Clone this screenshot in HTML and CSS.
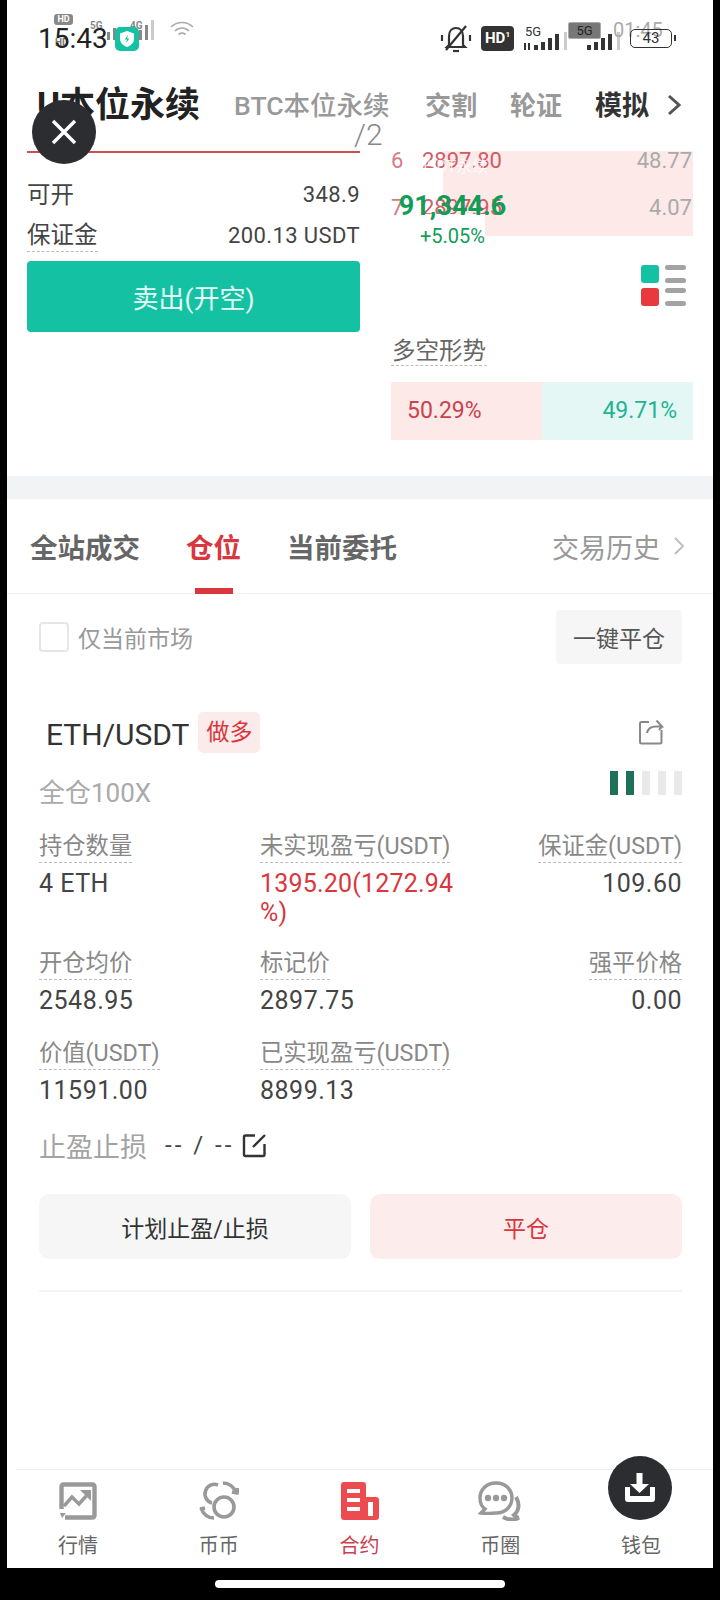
FILE: index.html
```html
<!DOCTYPE html>
<html lang="zh-CN">

<head>
    <meta charset="UTF-8">
    <meta name="viewport" content="width=device-width, initial-scale=1.0">
    <title>合约</title>
    <link rel="stylesheet" href="styles.css">
</head>

<body>
    <div class="screen">
        <!-- status bars, two of them drawn over each other -->
        <div class="status">
            <span class="st-hd">HD</span>
            <span class="st-ghost">HD</span>
            <span class="st-small st-5g">5G</span>
            <span class="st-small st-4g">4G</span>
            <svg class="st-sig1" width="60" height="24" viewBox="0 0 60 24" fill="#888">
                <rect x="0" y="14" width="3" height="8" /><rect x="6" y="10" width="3" height="12" />
                <rect x="26" y="17" width="3" height="5" /><rect x="32" y="12" width="3" height="10" />
                <rect x="38" y="7" width="3" height="15" /><rect x="44" y="2" width="3" height="20" fill="#ccc" />
            </svg>
            <svg class="st-wifi" width="24" height="20" viewBox="0 0 24 20" fill="none" stroke="#aaa" stroke-width="1.6">
                <path d="M1 7C7 1 17 1 23 7" /><path d="M5 11C9 7 15 7 19 11" /><path d="M8.500 14.500C10.500 13 13.500 13 15.500 14.500" />
            </svg>
            <span class="st-time">15:43</span>
            <span class="st-shield">
                <svg width="14" height="16" viewBox="0 0 14 16"><path d="M7 0L14 2.500V8C14 12 10.500 14.800 7 16C3.500 14.800 0 12 0 8V2.500Z" fill="#fff" /><path d="M7.800 4L4.800 8.600H6.800L6.200 12L9.200 7.400H7.200Z" fill="#14c2a3" /></svg>
            </span>

            <svg class="st-bell" width="32" height="30" viewBox="0 0 32 30" fill="none" stroke="#333" stroke-width="2.200">
                <path d="M9 21V12C9 7 12 4 16 4C20 4 23 7 23 12V21L25 23H7Z" />
                <path d="M13 27H19" />
                <path d="M26 2L6 26" />
                <path d="M2 11V17M30 11V17" />
            </svg>
            <span class="st-hd2">HD<sup>1</sup></span>
            <span class="st-mid st-5g2">5G</span>
            <svg class="st-sig2" width="46" height="22" viewBox="0 0 46 22" fill="#333">
                <rect x="1" y="13" width="2" height="7" /><rect x="5" y="13" width="2" height="7" />
                <rect x="11" y="15" width="4" height="5" /><rect x="18" y="12" width="4" height="8" />
                <rect x="25" y="8" width="4" height="12" /><rect x="32" y="4" width="4" height="16" />
                <rect x="41" y="2" width="3" height="18" fill="#ccc" />
            </svg>
            <span class="st-5gbox">5G</span>
            <svg class="st-sig3" width="46" height="22" viewBox="0 0 46 22" fill="#333">
                <rect x="2" y="15" width="4" height="5" /><rect x="9" y="12" width="4" height="8" />
                <rect x="16" y="8" width="4" height="12" /><rect x="23" y="4" width="4" height="16" />
                <rect x="32" y="2" width="3" height="18" fill="#ccc" />
            </svg>
            <span class="st-time2">01:45</span>
            <span class="st-batt">43</span>
        </div>

        <nav class="top-nav">
            <span class="nav-main">U本位永续</span>
            <span class="nav-item nav-btc">BTC本位永续<span class="nav-sub">/2</span></span>
            <span class="nav-item">交割</span>
            <span class="nav-item">轮证</span>
            <span class="nav-item nav-dark">模拟</span>
            <svg class="nav-arrow" width="14" height="22" viewBox="0 0 14 22" fill="none" stroke="#555" stroke-width="3">
                <path d="M2 2L12 11L2 20" />
            </svg>
        </nav>

        <section class="trade">
            <div class="order">
                <div class="order-row">
                    <span class="order-label">可开</span>
                    <span class="num">348.9</span>
                </div>
                <div class="order-row">
                    <span class="order-label dashed">保证金</span>
                    <span class="num">200.13 USDT</span>
                </div>
                <button class="sell-btn">卖出(开空)</button>
            </div>
            <div class="book">
                <div class="book-row row-a">
                    <span class="book-no">6</span>
                    <span class="book-price">2897.80</span>
                    <span class="book-qty">48.77</span>
                </div>
                <div class="book-row row-b">
                    <span class="book-no">7</span>
                    <span class="book-price">2897.95</span>
                    <span class="book-qty">4.07</span>
                </div>
                <div class="book-mode">
                    <div class="mode-icon">
                        <i class="mode-sq green"></i>
                        <div class="mode-lines"><i></i><i></i></div>
                        <i class="mode-sq red"></i>
                        <div class="mode-lines"><i></i><i></i></div>
                    </div>
                </div>
                <div class="trend-title"><span class="dashed">多空形势</span></div>
                <div class="trend-bar">
                    <span class="trend-long">50.29%</span>
                    <span class="trend-short">49.71%</span>
                </div>
            </div>
        </section>

        <div class="gap-band"></div>

        <div class="tabs">
            <span class="tab">全站成交</span>
            <span class="tab tab-on">仓位</span>
            <span class="tab">当前委托</span>
            <span class="tab-history">交易历史
                <svg width="12" height="20" viewBox="0 0 12 20" fill="none" stroke="#bbb" stroke-width="1.800"><path d="M2 2L10 10L2 18" /></svg>
            </span>
        </div>

        <div class="filter">
            <label class="filter-check"><i class="checkbox"></i>仅当前市场</label>
            <button class="close-all">一键平仓</button>
        </div>

        <div class="position">
            <div class="pos-head">
                <span class="pos-name">ETH/USDT</span>
                <span class="pos-tag">做多</span>
                <svg class="pos-share" width="26" height="26" viewBox="0 0 26 26" fill="none" stroke="#888" stroke-width="2">
                    <path d="M11 3H3.500A1.500 1.500 0 0 0 2 4.500V23A1.500 1.500 0 0 0 3.500 24.500H22A1.500 1.500 0 0 0 23.500 23V11" />
                    <path d="M9 14C10 9 14 7.500 18 7.500H24L18.500 1.500M24 7.500L21 11" />
                </svg>
            </div>
            <div class="pos-sub">
                <span>全仓100X</span>
                <div class="risk"><i class="on"></i><i class="on"></i><i></i><i></i><i></i></div>
            </div>

            <div class="pos-grid">
                <div class="cell">
                    <span class="cell-label dashed">持仓数量</span>
                    <span class="cell-val">4 ETH</span>
                </div>
                <div class="cell">
                    <span class="cell-label dashed">未实现盈亏(USDT)</span>
                    <span class="cell-val cell-red">1395.20(1272.94<br>%)</span>
                </div>
                <div class="cell cell-right">
                    <span class="cell-label dashed">保证金(USDT)</span>
                    <span class="cell-val">109.60</span>
                </div>
                <div class="cell">
                    <span class="cell-label dashed">开仓均价</span>
                    <span class="cell-val">2548.95</span>
                </div>
                <div class="cell">
                    <span class="cell-label dashed">标记价</span>
                    <span class="cell-val">2897.75</span>
                </div>
                <div class="cell cell-right">
                    <span class="cell-label dashed">强平价格</span>
                    <span class="cell-val">0.00</span>
                </div>
                <div class="cell">
                    <span class="cell-label dashed">价值(USDT)</span>
                    <span class="cell-val">11591.00</span>
                </div>
                <div class="cell">
                    <span class="cell-label dashed">已实现盈亏(USDT)</span>
                    <span class="cell-val">8899.13</span>
                </div>
            </div>

            <div class="stop-row">
                <span class="stop-label">止盈止损</span>
                <span class="stop-val">-- / --</span>
                <svg width="25" height="25" viewBox="0 0 25 25" fill="none" stroke="#333" stroke-width="2.400">
                    <path d="M13 2.500H3.500A1.500 1.500 0 0 0 2 4V21.500A1.500 1.500 0 0 0 3.500 23H21A1.500 1.500 0 0 0 22.500 21.500V11" />
                    <path d="M11 14L23 2" />
                </svg>
            </div>

            <div class="pos-actions">
                <button class="act-btn">计划止盈/止损</button>
                <button class="act-btn act-red">平仓</button>
            </div>
        </div>

        <div class="spacer"></div>

        <footer class="tabbar">
            <div class="bar-item">
                <svg width="38" height="38" viewBox="0 0 38 38" fill="none" stroke="#999" stroke-width="4.400">
                    <path d="M2.500 27V4.500A2 2 0 0 1 4.500 2.500H33.500A2 2 0 0 1 35.500 4.500V33.500A2 2 0 0 1 33.500 35.500H6" />
                    <path d="M5 24L13 15L20 22L29 12" stroke-width="3.400" />
                    <path d="M21 8H32V19Z" fill="#999" stroke="none" />
                    <path d="M1 31H7L3 36Z" fill="#999" stroke="none" />
                </svg>
                <span>行情</span>
            </div>
            <div class="bar-item">
                <svg width="40" height="40" viewBox="0 0 40 40" fill="none" stroke="#999" stroke-width="3.600">
                    <path d="M13 22A9.500 9.500 0 1 1 19 4" />
                    <circle cx="25" cy="26" r="10" />
                    <path d="M24 2C30 2 35 6 37 12M33 11L38 12L39 7" />
                    <path d="M15 37C9 37 4 33 2 27M6 27L1 28" />
                </svg>
                <span>币币</span>
            </div>
            <div class="bar-item bar-on">
                <svg width="38" height="38" viewBox="0 0 38 38">
                    <path d="M3 0H22A3 3 0 0 1 25 3V15H35A3 3 0 0 1 38 18V35A3 3 0 0 1 35 38H3A3 3 0 0 1 0 35V3A3 3 0 0 1 3 0Z" fill="#ec4c50" />
                    <path d="M6 9H19M6 18H19M6 27H19" stroke="#fff" stroke-width="4" />
                    <rect x="27" y="20" width="5" height="14" fill="#fff" />
                </svg>
                <span>合约</span>
            </div>
            <div class="bar-item">
                <svg width="44" height="40" viewBox="0 0 44 40" fill="none" stroke="#999" stroke-width="3.400">
                    <path d="M18 2C8 2 2 9 2 17C2 22 4 26 7 28L3 32C10 33 14 32 18 32C28 32 34 25 34 17C34 9 28 2 18 2Z" />
                    <circle cx="10" cy="17" r="1.500" fill="#999" /><circle cx="18" cy="17" r="1.500" fill="#999" /><circle cx="26" cy="17" r="1.500" fill="#999" />
                    <path d="M38 16C42 23 41 30 36 34C38 36 40 37 41 37C36 39 30 39 25 36" stroke-width="4" />
                </svg>
                <span>币圈</span>
            </div>
            <div class="bar-item">
                <div class="bar-blank"></div>
                <span>钱包</span>
            </div>
        </footer>

        <!-- floating overlays -->
        <div class="float-close">
            <svg width="26" height="26" viewBox="0 0 26 26" stroke="#fff" stroke-width="3.400"><path d="M2 2L24 24M24 2L2 24" /></svg>
        </div>
        <div class="float-price">
            <span class="float-name">USDT永续</span>
            <span class="float-num">91,344.6</span>
            <span class="float-pct">+5.05%</span>
        </div>
        <div class="float-download">
            <svg width="32" height="32" viewBox="0 0 32 32" fill="#fff">
                <path d="M12.500 1H18.500V12H25L15.500 21L6 12H12.500Z" />
                <path d="M1 15H6V24H26V15H31V27A3 3 0 0 1 28 30H4A3 3 0 0 1 1 27Z" />
            </svg>
        </div>
    </div>
    <div class="home-line"></div>
</body>

</html>
```

FILE: styles.css
```css
* {
    margin: 0;
    padding: 0;
    box-sizing: border-box;
}

body {
    width: 720px;
    height: 1600px;
    padding: 0 7px;
    background-color: #000;
    font-family: "Roboto", "Noto Sans CJK SC", sans-serif;
    overflow: hidden;
}

button {
    border: 0;
    font-family: inherit;
}

i {
    display: block;
}

.screen {
    position: relative;
    display: flex;
    flex-direction: column;
    width: 706px;
    height: 1568px;
    background-color: #fff;
    overflow: hidden;
}

.home-line {
    width: 290px;
    height: 8px;
    margin: 12px 0 0 208px;
    border-radius: 4px;
    background-color: #fff;
}

.dashed {
    border-bottom: 1px dashed #bbb;
}

/* status bars */
.status {
    position: relative;
    height: 82px;
    flex: none;
}

.status > * {
    position: absolute;
}

.st-hd {
    left: 47px;
    top: 14px;
    width: 19px;
    height: 11px;
    border-radius: 3px;
    background-color: #888;
    color: #fff;
    font-size: 9px;
    line-height: 11px;
    font-weight: 700;
    text-align: center;
}

.st-ghost {
    left: 48px;
    top: 37px;
    color: #777;
    font-size: 10px;
    line-height: 11px;
    font-weight: 700;
}

.st-small {
    top: 20px;
    color: #888;
    font-size: 10px;
    line-height: 12px;
    font-weight: 700;
}

.st-5g {
    left: 83px;
}

.st-4g {
    left: 123px;
}

.st-sig1 {
    left: 100px;
    top: 18px;
}

.st-wifi {
    left: 163px;
    top: 20px;
}

.st-time {
    left: 31px;
    top: 23px;
    color: #222;
    font-size: 28px;
    line-height: 32px;
}

.st-shield {
    display: flex;
    align-items: center;
    justify-content: center;
    left: 108px;
    top: 27px;
    width: 24px;
    height: 24px;
    border-radius: 5px;
    background-color: #14c2a3;
}

.st-bell {
    left: 433px;
    top: 24px;
}

.st-hd2 {
    left: 474px;
    top: 26px;
    width: 33px;
    height: 25px;
    border-radius: 4px;
    background-color: #333;
    color: #fff;
    font-size: 15px;
    line-height: 25px;
    font-weight: 700;
    text-align: center;
}

.st-hd2 sup {
    font-size: 8px;
    line-height: 0;
}

.st-mid {
    top: 24px;
    color: #333;
    font-size: 13px;
    line-height: 15px;
}

.st-5g2 {
    left: 518px;
}

.st-sig2 {
    left: 516px;
    top: 30px;
}

.st-5gbox {
    left: 561px;
    top: 22px;
    width: 33px;
    height: 17px;
    border: 1px solid #aaa;
    border-radius: 2px;
    background-color: #777;
    color: #222;
    font-size: 13px;
    line-height: 15px;
    text-align: center;
}

.st-sig3 {
    left: 578px;
    top: 30px;
}

.st-time2 {
    left: 606px;
    top: 18px;
    color: #aaa;
    font-size: 20px;
    line-height: 24px;
}

.st-batt {
    left: 623px;
    top: 29px;
    width: 42px;
    height: 19px;
    border: 1.500px solid #333;
    border-radius: 5px;
    color: #333;
    font-size: 15px;
    line-height: 16px;
    text-align: center;
}

.st-batt::after {
    content: "";
    position: absolute;
    right: -5px;
    top: 5px;
    width: 2px;
    height: 6px;
    background-color: #333;
}

/* top tabs */
.top-nav {
    display: flex;
    align-items: flex-start;
    height: 69px;
    padding-left: 30px;
    flex: none;
    white-space: nowrap;
}

.nav-main {
    width: 197px;
    margin-top: 2px;
    color: #222;
    font-size: 35px;
    line-height: 44px;
    font-weight: 700;
}

.nav-item {
    margin-top: 2px;
    margin-right: 33px;
    color: #999;
    font-size: 26px;
    line-height: 44px;
    font-weight: 700;
}

.nav-btc {
    width: 158px;
    font-size: 26.500px;
    font-weight: 500;
}

.nav-sub {
    display: block;
    margin: -11px 0 0 120px;
    color: #888;
    font-size: 30px;
    line-height: 36px;
    font-weight: 300;
}

.nav-dark {
    color: #333;
    margin-right: 18px;
    font-size: 27px;
}

.nav-arrow {
    margin-top: 12px;
}

/* order form + order book */
.trade {
    display: flex;
    height: 325px;
    flex: none;
}

.order {
    width: 333px;
    margin-left: 20px;
    border-top: 2px solid #c9504f;
}

.order-row {
    display: flex;
    align-items: center;
    justify-content: space-between;
    height: 41px;
    color: #444;
    font-size: 23.500px;
}

.order-row:first-child {
    margin-top: 21px;
}

.order-label {
    line-height: 32px;
}

.num {
    font-size: 22px;
    letter-spacing: .4px;
}

.sell-btn {
    display: block;
    width: 333px;
    height: 71px;
    margin-top: 5px;
    border-radius: 4px;
    background-color: #14c2a3;
    color: #e6fbf7;
    font-size: 26px;
}

.book {
    width: 302px;
    margin-left: 31px;
}

.book-row {
    display: flex;
    align-items: center;
    background: linear-gradient(to right, #fff 52px, #fde9e8 52px);
    color: #c9424f;
    font-size: 22px;
}

.row-a {
    height: 38px;
    padding-bottom: 20px;
}

.row-b {
    height: 47px;
    padding-bottom: 11px;
}

.book-no {
    width: 31px;
    opacity: .7;
}

.book-price {
    opacity: .85;
}

.book-qty {
    margin-left: auto;
    padding-right: 1px;
    color: #aaa;
    font-size: 22px;
}

.book-mode {
    display: flex;
    justify-content: flex-end;
    height: 93px;
    padding: 29px 7px 0 0;
}

.mode-icon {
    display: grid;
    grid-template-columns: 18px 21px;
    grid-auto-rows: 18px;
    column-gap: 6px;
    row-gap: 5px;
}

.mode-sq {
    border-radius: 3px;
}

.mode-sq.green {
    background-color: #14c2a3;
}

.mode-sq.red {
    background-color: #e8393d;
}

.mode-lines {
    display: flex;
    flex-direction: column;
    justify-content: space-between;
}

.mode-lines i {
    height: 5px;
    border-radius: 3px;
    background-color: #a3a3a3;
}

.trend-title {
    height: 50px;
    margin-top: 6px;
    color: #666;
    font-size: 23.500px;
    line-height: 32px;
}

.trend-title .dashed {
    display: inline-block;
    height: 31px;
    padding: 0 1px;
}

.trend-bar {
    display: flex;
    height: 58px;
    margin-top: -3px;
    font-size: 23px;
    line-height: 58px;
}

.trend-long {
    width: 151px;
    padding-left: 16px;
    background-color: #fde9e8;
    color: #c9424f;
}

.trend-short {
    width: 151px;
    padding-right: 16px;
    background-color: #e4f7f4;
    color: #22b394;
    text-align: right;
}

.gap-band {
    height: 23px;
    flex: none;
    background-color: #f2f3f5;
}

/* position list tabs */
.tabs {
    display: flex;
    align-items: center;
    height: 95px;
    padding: 0 28px 0 23px;
    flex: none;
    border-bottom: 1px solid #f3f3f3;
    color: #666;
    font-size: 27.500px;
}

.tab {
    position: relative;
    margin-right: 46px;
    font-weight: 700;
}

.tab-on {
    color: #d9363e;
}

.tab-on::after {
    content: "";
    position: absolute;
    left: 9px;
    bottom: -28px;
    width: 38px;
    height: 6px;
    background-color: #d9363e;
}

.tab-history {
    display: flex;
    align-items: center;
    gap: 13px;
    margin-left: auto;
    color: #999;
    font-size: 27px;
}

.filter {
    display: flex;
    align-items: center;
    justify-content: space-between;
    height: 72px;
    padding: 0 31px 0 32px;
    margin-top: 7px;
    flex: none;
}

.filter-check {
    display: flex;
    align-items: center;
    gap: 9px;
    color: #999;
    font-size: 23px;
}

.checkbox {
    width: 30px;
    height: 30px;
    border: 2px solid #e6e6e6;
    border-radius: 4px;
}

.close-all {
    width: 126px;
    height: 54px;
    border-radius: 4px;
    background-color: #f6f6f6;
    color: #555;
    font-size: 23px;
}

/* position card */
.position {
    margin: 0 31px 0 32px;
    padding-top: 41px;
    flex: none;
    border-bottom: 2px solid #f3f3f3;
}

.pos-head {
    display: flex;
    align-items: center;
    height: 42px;
    padding-left: 7px;
}

.pos-name {
    margin-top: -2px;
    color: #333;
    font-size: 30px;
}

.pos-tag {
    width: 62px;
    height: 41px;
    margin: -6px 0 0 9px;
    border-radius: 5px;
    background-color: #fcebeb;
    color: #d9363e;
    font-size: 23px;
    line-height: 41px;
    text-align: center;
}

.pos-share {
    margin: -6px 18px 0 auto;
}

.pos-sub {
    display: flex;
    align-items: center;
    justify-content: space-between;
    height: 40px;
    margin-top: 14px;
    color: #aaa;
    font-size: 26px;
}

.risk {
    display: flex;
    gap: 8px;
    margin-top: -15px;
}

.risk i {
    width: 8px;
    height: 24px;
    background-color: #e9e9e9;
}

.risk i.on {
    background-color: #1f6f5b;
}

.pos-grid {
    display: grid;
    grid-template-columns: 221px 1fr 1fr;
    margin-top: 20px;
    align-items: start;
}

.cell {
    display: flex;
    flex-direction: column;
    align-items: flex-start;
    padding-bottom: 20px;
}

.cell-right {
    align-items: flex-end;
}

.cell-label {
    color: #888;
    font-size: 23.300px;
    line-height: 32px;
}

.cell-val {
    margin-top: 6px;
    color: #444;
    font-size: 25px;
    line-height: 29px;
    letter-spacing: .5px;
}

.cell-red {
    color: #d9363e;
    letter-spacing: .2px;
}

.pos-grid .cell:nth-child(n+4) {
    padding-bottom: 0;
    height: 90px;
}

.stop-row {
    display: flex;
    align-items: center;
    height: 44px;
    margin-top: -4px;
}

.stop-label {
    width: 126px;
    color: #a3a3a3;
    font-size: 27px;
}

.stop-val {
    width: 77px;
    color: #444;
    font-size: 24px;
    letter-spacing: 3px;
    white-space: nowrap;
}

.pos-actions {
    display: flex;
    gap: 19px;
    margin-top: 27px;
    padding-bottom: 31px;
}

.act-btn {
    flex: 1;
    height: 65px;
    border-radius: 10px;
    background-color: #f6f6f6;
    color: #333;
    font-size: 23px;
}

.act-red {
    background-color: #fdecec;
    color: #d9363e;
}

.spacer {
    flex: 1;
}

/* bottom bar */
.tabbar {
    display: flex;
    justify-content: space-between;
    height: 99px;
    margin-left: 9px;
    padding: 0 22px 0 12px;
    flex: none;
    border-top: 1px solid #f0f0f0;
}

.bar-item {
    display: flex;
    flex-direction: column;
    align-items: center;
    width: 100px;
    padding-top: 11px;
    color: #666;
    font-size: 20px;
}

.bar-item svg,
.bar-blank {
    height: 40px;
}

.bar-item span {
    margin-top: 10px;
    line-height: 30px;
}

.bar-on {
    color: #c9424f;
}

/* floating things over the page */
.float-close,
.float-download {
    position: absolute;
    display: flex;
    align-items: center;
    justify-content: center;
    border-radius: 50%;
    background-color: #2b2d31;
}

.float-close {
    left: 25px;
    top: 100px;
    width: 64px;
    height: 64px;
}

.float-download {
    left: 601px;
    top: 1456px;
    width: 64px;
    height: 64px;
}

.float-price {
    position: absolute;
    left: 368px;
    top: 130px;
    display: flex;
    flex-direction: column;
    align-items: center;
    width: 155px;
    height: 152px;
    padding-top: 26px;
}

.float-name {
    color: #fff;
    font-size: 16px;
    line-height: 22px;
    opacity: .8;
}

.float-num {
    position: relative;
    z-index: 1;
    margin-top: 11px;
    color: #0f9d58;
    font-size: 27px;
    line-height: 34px;
    font-weight: 700;
}

.float-pct {
    margin-top: -9px;
    padding-top: 10px;
    background-color: #fff;
    color: #0f9d58;
    font-size: 20px;
    line-height: 24px;
}
```
